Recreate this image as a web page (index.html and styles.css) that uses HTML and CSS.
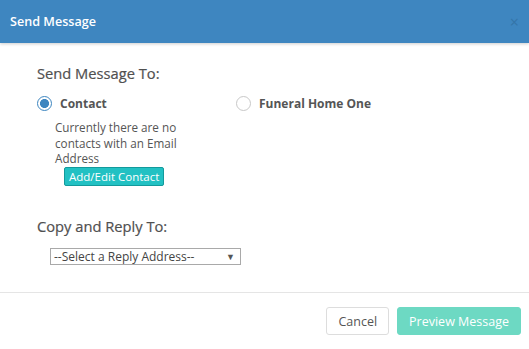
FILE: index.html
```html
<!DOCTYPE html>
<html lang="en">
<head>
    <meta charset="UTF-8">
    <title>Send Message</title>
    <link rel="stylesheet" href="styles.css">
</head>
<body>
    <div class="modal">
        <div class="modal-header">
            <h4 class="modal-title">Send Message</h4>
            <span class="close">&times;</span>
        </div>

        <div class="modal-body">
            <h3 class="section-title">Send Message To:</h3>
            <div class="recipients">
                <div class="recipient">
                    <label class="radio-row">
                        <span class="radio checked"></span>
                        <span class="radio-label">Contact</span>
                    </label>
                    <p class="note">Currently there are no contacts with an Email Address</p>
                    <button class="btn-small">Add/Edit Contact</button>
                </div>
                <div class="recipient">
                    <label class="radio-row">
                        <span class="radio"></span>
                        <span class="radio-label">Funeral Home One</span>
                    </label>
                </div>
            </div>

            <h3 class="section-title reply-title">Copy and Reply To:</h3>
            <div class="select-box">
                <span>--Select a Reply Address--</span>
                <span class="arrow">&#9660;</span>
            </div>
        </div>

        <div class="modal-footer">
            <button class="btn btn-cancel">Cancel</button>
            <button class="btn btn-preview">Preview Message</button>
        </div>
    </div>
</body>
</html>
```

FILE: styles.css
```css
* {
    margin: 0;
    padding: 0;
    box-sizing: border-box;
}

body {
    background-color: #fff;
    font-family: "Open Sans", "Liberation Sans", sans-serif;
    color: #555;
}

.modal {
    width: 529px;
    height: 349px;
    display: flex;
    flex-direction: column;
}

.modal-header {
    height: 43px;
    background-color: #3e86c0;
    display: flex;
    align-items: center;
    justify-content: space-between;
    padding: 0 10px;
    box-shadow: 0 1px 3px rgba(0, 0, 0, 0.2);
}

.modal-title {
    color: #fff;
    font-size: 12.6px;
    font-weight: 600;
}

.close {
    color: #2e6a9a;
    font-size: 16px;
    opacity: 0.6;
    line-height: 1;
}

.modal-body {
    padding: 20px 37px 0;
    height: 249px;
}

.section-title {
    font-size: 14.7px;
    font-weight: 400;
    color: #505050;
    line-height: 20px;
    -webkit-text-stroke: 0.2px #505050;
}

.recipients {
    display: flex;
    margin-top: 12px;
}

.recipient {
    width: 199px;
}

.radio-row {
    display: flex;
    align-items: center;
    gap: 8px;
    height: 16px;
}

.radio {
    width: 15px;
    height: 15px;
    border-radius: 50%;
    border: 1px solid #c8c8c8;
    background: #fff;
}

.radio.checked {
    border: 1.5px solid #3e86c0;
    background: radial-gradient(circle, #3e86c0 0, #3e86c0 4.2px, #fff 4.8px);
}

.radio-label {
    font-size: 12px;
    font-weight: 700;
    color: #555;
}

.note {
    font-size: 11.7px;
    line-height: 15.5px;
    margin: 9px 0 0 18px;
    width: 150px;
}

.btn-small {
    margin: 0 0 0 27px;
    font-family: inherit;
    font-size: 11.5px;
    color: #fff;
    background-color: #22c1c3;
    border: 1px solid #139a9c;
    border-radius: 2px;
    padding: 0 4px;
    height: 19px;
    line-height: 17px;
    vertical-align: top;
}

.reply-title {
    margin-top: 27px;
}

.select-box {
    margin: 12px 0 0 13px;
    width: 191px;
    height: 17px;
    border: 1px solid #a9a9a9;
    display: flex;
    align-items: center;
    justify-content: space-between;
    padding: 0 5px 0 3px;
    font-size: 12px;
    color: #444;
}

.arrow {
    font-size: 9px;
    color: #555;
}

.modal-footer {
    border-top: 1px solid #e5e5e5;
    display: flex;
    justify-content: flex-end;
    gap: 8px;
    padding: 14px 8px 0;
}

.btn {
    font-family: inherit;
    font-size: 12.5px;
    height: 28px;
    border-radius: 3px;
    padding: 0 11px;
}

.btn-cancel {
    background: #fff;
    border: 1px solid #ddd;
    color: #555;
}

.btn-preview {
    background: #6dd9c3;
    border: 1px solid #6dd9c3;
    color: #fff;
}
```
